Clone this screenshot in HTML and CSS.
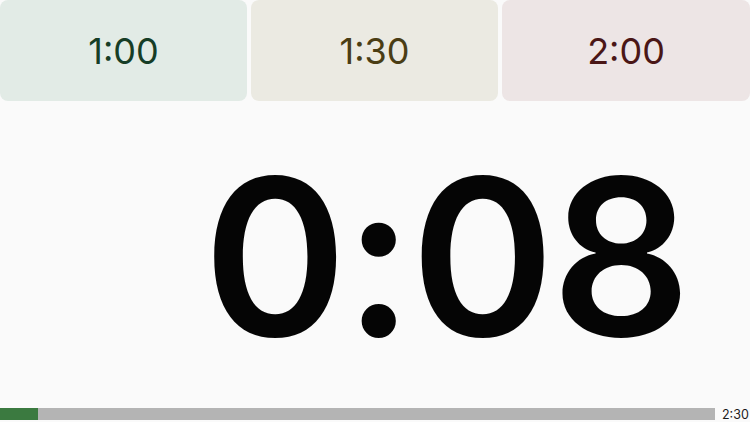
FILE: index.html
```html
<!DOCTYPE html>
<html>
<head>
<meta charset="utf-8">
<link rel="stylesheet" href="styles.css">
</head>
<body>
<div class="app">
  <div class="presets">
    <button class="preset green">1:00</button>
    <button class="preset olive">1:30</button>
    <button class="preset red">2:00</button>
  </div>
  <div class="display">
    <div class="time">0:08</div>
  </div>
  <div class="progress-row">
    <div class="track"><div class="fill" style="width:5.3%"></div></div>
    <div class="total">2:30</div>
  </div>
</div>
</body>
</html>
```
FILE: styles.css
```css
html, body {
  margin: 0;
  padding: 0;
  background: #fafafa;
}
.app {
  width: 750px;
  height: 422px;
  display: flex;
  flex-direction: column;
  font-family: Inter, "Liberation Sans", sans-serif;
}
.presets {
  display: grid;
  grid-template-columns: 247px 247px 248px;
  column-gap: 4px;
  height: 101px;
}
.preset {
  border: none;
  border-radius: 8px;
  font-family: Inter, "Liberation Sans", sans-serif;
  font-size: 36px;
  font-weight: 400;
  padding: 0;
  margin: 0;
}
.green { background: #e2ebe6; color: #163d26; }
.olive { background: #ebeae2; color: #4a3d14; }
.red { background: #ede5e5; color: #4a1616; }
.display {
  flex: 1;
  display: flex;
  align-items: center;
  justify-content: flex-end;
  padding-right: 62px;
}
.time {
  font-size: 218px;
  font-weight: 600;
  color: #050505;
  letter-spacing: -3px;
  line-height: 1;
  margin-top: 4px;
}
.progress-row {
  display: flex;
  align-items: center;
  height: 12px;
  margin-bottom: 2px;
  gap: 7px;
}
.track {
  flex: 1;
  height: 12px;
  background: #b4b4b4;
}
.fill {
  height: 100%;
  background: #3b7a40;
}
.total {
  width: 28px;
  font-size: 12.5px;
  color: #1a1a1a;
}
```
